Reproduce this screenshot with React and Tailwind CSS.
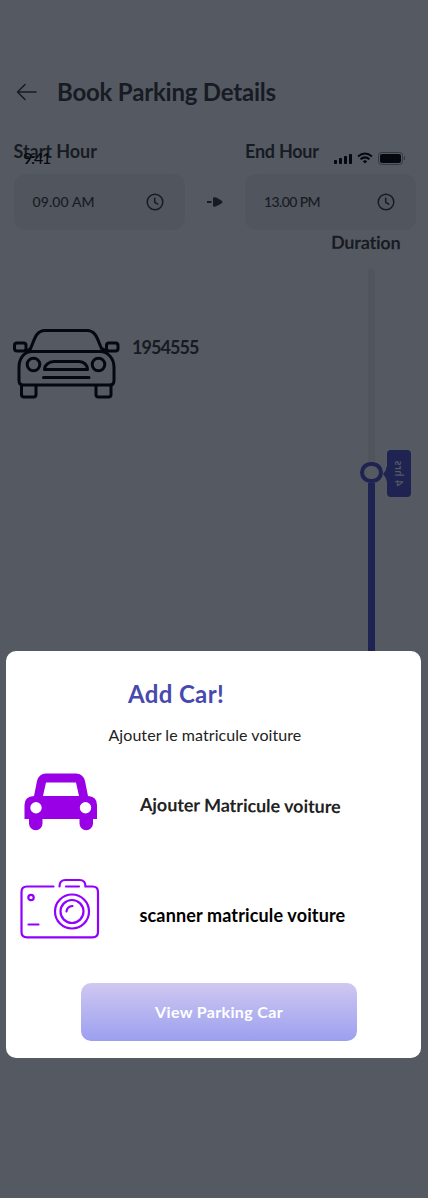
import React from "react";

function Clock() {
  return (
    <svg className="h-5 w-5 shrink-0" viewBox="0 0 20 20" fill="none" stroke="#171b23" strokeWidth="1.5" strokeLinecap="round" strokeLinejoin="round">
      <circle cx="10" cy="10" r="7.8" />
      <path d="M9.7 6.2v4.1l3 1.8" />
    </svg>
  );
}

function Field({ label, value, className, valueClassName }) {
  return (
    <div className="w-[171px]">
      <div className={"h-6 whitespace-nowrap text-lg leading-6 font-bold text-[#171b23] " + className}>{label}</div>
      <div className="mt-[11px] flex h-14 items-center justify-between rounded-xl bg-[#51555d] pr-[20px] pl-[19px]">
        <span className={"text-sm font-medium " + valueClassName}>{value}</span>
        <Clock />
      </div>
    </div>
  );
}

function OutlineCar() {
  return (
    <svg className="h-[72px] w-[108px] shrink-0" viewBox="0 0 108 72" fill="none" stroke="#05080f" strokeWidth="3" strokeLinejoin="round" strokeLinecap="round">
      <path d="M17.5 22.500C22 15 22.500 2.500 33 2.500H75C85.500 2.500 86 15 90.500 22.500" />
      <path d="M20 23.500H88C96 23.500 102 30.500 102 39.500V52.500Q102 57 98 57H11Q7 57 7 52.500V39.500C7 30.500 12 23.500 20 23.500Z" />
      <rect x="2.500" y="15" width="11.500" height="8" rx="2.500" />
      <rect x="94.500" y="15" width="11.500" height="8" rx="2.500" />
      <path d="M14 23.500L18 21M95 23.500L91 21" />
      <circle cx="21.500" cy="36.500" r="6.300" />
      <circle cx="86.500" cy="36.500" r="6.300" />
      <path d="M42 33.500H67C72 33.500 75.500 37 75.500 41.500H32.500C32.500 37 37 33.500 42 33.500Z" />
      <path d="M31.500 49.500H77M9.500 57V66.500Q9.500 69 12 69H21.500Q24 69 24 66.500V58M84 58V66.500Q84 69 86.500 69H96.500Q99 69 99 66.500V57" />
    </svg>
  );
}

function SolidCar() {
  return (
    <svg className="h-[58px] w-[74px]" viewBox="0 0 74 58">
      <path fill="#9900e6" fillRule="evenodd" d="M22 .5H52Q59 .5 61 8L64 23Q73 23.500 73 32V46H69V50.500A6.700 6.700 0 0 1 55.500 50.500V46H18.500V50.500A6.700 6.700 0 0 1 5 50.500V46H.5V32Q.5 23.500 10 23L13 8Q15 .5 22 .5ZM22 9.500L19 23H55L52 9.500ZM12 29A5.700 5.700 0 1 0 12 40.400A5.700 5.700 0 1 0 12 29ZM61.500 29A5.700 5.700 0 1 0 61.500 40.400A5.700 5.700 0 1 0 61.500 29Z" />
    </svg>
  );
}

function Camera() {
  return (
    <svg className="h-[61px] w-20" viewBox="0 0 80 61" fill="none" stroke="#9200ff" strokeWidth="2.200" strokeLinecap="round">
      <path d="M33.500 8.500H7Q1.500 8.500 1.500 14V54Q1.500 59.300 7 59.300H72.500Q78 59.300 78 54V14Q78 8.500 72.500 8.500H65.500Q65.500 2 59.500 2H45.500Q39.500 2 39.500 8.500M46 8.500H59M8.500 46.500H18.500" />
      <circle cx="11" cy="19.500" r="2.700" />
      <circle cx="52" cy="33.500" r="17" />
      <circle cx="52" cy="33.500" r="11.500" />
      <path d="M46.500 33.500Q47 28.500 52.500 28" />
    </svg>
  );
}

function StatusBar() {
  return (
    <div className="absolute top-[148px] left-[23px] flex w-[382px] items-center text-[#05080f]">
      <span className="w-[311px] text-base leading-5 font-medium tracking-[-1.200px]">9:41</span>
      <svg className="h-3 w-[18px]" viewBox="0 0 18 12" fill="currentColor">
        <rect y="8" width="3" height="4" rx=".8" /><rect x="5" y="6" width="3" height="6" rx=".8" /><rect x="10" y="4" width="3" height="8" rx=".8" /><rect x="15" y="2" width="3" height="10" rx=".8" />
      </svg>
      <svg className="ml-[5px] h-3 w-4" viewBox="0 0 16 12" fill="none" stroke="currentColor" strokeWidth="2">
        <path d="M1 4.500Q8-1.500 15 4.500M3.500 7.300Q8 3.500 12.500 7.300" /><path d="M5.800 9.200Q8 7.400 10.200 9.200L8 11.500Z" fill="currentColor" stroke="none" />
      </svg>
      <div className="ml-[5px] h-[13px] w-[25px] rounded-[3.500px] border border-[#34383f] p-px"><div className="h-full rounded-[2px] bg-[#05080f]" /></div>
      <div className="ml-px h-1 w-px bg-[#34383f]" />
    </div>
  );
}

function Dialog() {
  return (
    <section className="absolute top-[651px] left-[6px] flex h-[407px] w-[415px] flex-col rounded-[10px] bg-white pt-[26px]">
      <h2 className="mt-px ml-[122px] h-8 text-2xl leading-8 font-bold tracking-[0.350px] text-[#4849af]">Add Car!</h2>
      <p className="mt-[13px] ml-[102.500px] h-6 text-base leading-6 tracking-[0.060px] text-[#222]">Ajouter le matricule voiture</p>
      <div className="mt-[24px] flex h-[61px] items-center pl-[17.500px]">
        <SolidCar />
        <span className="mt-[5px] ml-[42.500px] origin-left rotate-[0.600deg] text-lg font-bold tracking-[-0.060px] whitespace-nowrap text-[#222]">Ajouter Matricule voiture</span>
      </div>
      <div className="mt-[46px] flex h-[61px] items-center pl-[13.500px]">
        <Camera />
        <span className="mt-[12px] ml-[40px] text-lg font-bold tracking-[0.140px] whitespace-nowrap text-black">scanner matricule voiture</span>
      </div>
      <button className="mt-[44px] ml-[75px] h-[58px] w-[276px] rounded-[10px] bg-linear-to-b from-[#cfc8f0] to-[#9c9ff0] text-base font-bold tracking-[0.350px] text-white">View Parking Car</button>
    </section>
  );
}

export default function App() {
  return (
    <main className="relative h-[1198px] w-[428px] overflow-hidden bg-[#555961] pt-[76px] font-['Lato',sans-serif] text-[#171b23]">
      <header className="flex h-8 items-center pl-[16px]">
        <svg className="h-5 w-[22px]" viewBox="0 0 22 20" fill="none" stroke="#171b23" strokeWidth="1.500" strokeLinecap="round" strokeLinejoin="round"><path d="M20 10H1.500M9 2.500L1.500 10L9 17.500" /></svg>
        <h1 className="ml-[19px] text-2xl leading-8 font-bold tracking-[-0.200px]">Book Parking Details</h1>
      </header>
      <div className="mt-[31px] flex pl-[13.500px]">
        <Field label="Start Hour" value="09.00 AM" className="tracking-[-0.050px]" valueClassName="tracking-[0.100px]" />
        <svg className="mr-[22px] ml-[22.500px] mt-[57px] h-3 w-4" viewBox="0 0 16 12" fill="#171b23"><path d="M0 5H4.500V7H0ZM6 2.500Q6 1 8 1.300Q10 1.600 15 5Q16 6 15 7Q10 10.400 8 10.700Q6 11 6 9.500Z" /></svg>
        <Field label="End Hour" value="13.00 PM" className="tracking-[-0.250px]" valueClassName="tracking-[-0.600px]" />
      </div>
      <div className="flex justify-between">
        <div className="mt-[98px] ml-[12px] flex items-start">
          <OutlineCar />
          <span className="mt-[7px] ml-[12px] text-lg leading-6 font-bold tracking-[-0.950px]">1954555</span>
        </div>
        <div className="w-[97px]">
          <div className="h-6 w-fit rotate-[0.600deg] text-lg leading-6 font-bold tracking-[-0.200px]">Duration</div>
          <div className="mt-[15px] ml-[29px] flex h-[390px]">
            <div className="flex w-[23px] flex-col items-center">
              <div className="h-[193px] w-[7px] rounded-t-full bg-[#50545c]" />
              <div className="h-[21px] w-[23px] rounded-full border-4 border-[#1f2351]" />
              <div className="w-[7px] flex-1 bg-[#1f2351]" />
            </div>
            <div className="mt-[181px] flex h-[47px] items-center">
              <svg className="h-4 w-[4px]" viewBox="0 0 4 16" fill="#1f2351"><path d="M0 8Q3 5 4 0V16Q3 11 0 8Z" /></svg>
              <div className="flex h-[47px] w-6 items-center justify-center rounded-[4px] bg-[#1f2351]"><span className="-rotate-90 -scale-y-100 text-[11px] font-bold tracking-[0.400px] whitespace-nowrap text-[#555961]">4 hrs</span></div>
            </div>
          </div>
        </div>
      </div>
      <StatusBar />
      <Dialog />
    </main>
  );
}
